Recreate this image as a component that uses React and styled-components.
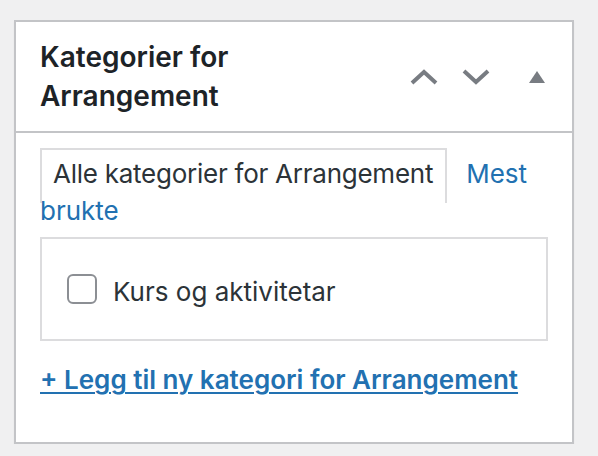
import React from 'react';
import styled, { createGlobalStyle } from 'styled-components';

const GlobalStyle = createGlobalStyle`
  body {
    margin: 0;
    background: #f0f0f1;
    font-family: Inter, "Noto Sans", sans-serif;
  }
`;

const Page = styled.div`
  padding: 20px 0 0 14px;
`;

const Postbox = styled.div`
  width: 560px;
  box-sizing: border-box;
  background: #fff;
  border: 2px solid #c3c4c7;
  box-shadow: 0 2px 2px rgba(0, 0, 0, 0.04);
`;

const Header = styled.div`
  display: flex;
  align-items: center;
  border-bottom: 2px solid #c3c4c7;
`;

const Title = styled.h2`
  flex: 1;
  margin: 0;
  padding: 16px 24px 15px;
  font-size: 28px;
  font-weight: 600;
  line-height: 1.4;
  color: #1d2327;
`;

const Actions = styled.div`
  display: flex;
  align-items: center;
`;

const IconButton = styled.button`
  width: ${(p) => p.$w}px;
  height: 72px;
  padding: 0;
  border: 0;
  background: none;
  display: flex;
  align-items: center;
  justify-content: center;
  cursor: pointer;
`;

const Inside = styled.div`
  padding: 22px 24px 44px;
`;

const Tabs = styled.ul`
  margin: 0 0 8px;
  padding: 0;
  list-style: none;
  font-size: 26px;
  line-height: 37px;
`;

const ActiveTab = styled.li`
  display: inline;
  padding: 8px 12px 14px 11px;
  border: 2px solid #dcdcde;
  border-bottom: 0;
  color: #2c3338;
  letter-spacing: -0.25px;
`;

const Tab = styled.li`
  display: inline;
  margin-left: 19px;

  a {
    color: #2271b1;
    text-decoration: none;
  }
`;

const Panel = styled.div`
  height: 100px;
  border: 2px solid #dcdcde;
  display: flex;
  align-items: center;
  padding: 0 25px;
`;

const Item = styled.label`
  display: flex;
  align-items: center;
  gap: 16px;
  font-size: 26px;
  line-height: 37px;
  color: #2c3338;
`;

const ItemText = styled.span`
  padding-top: 5px;
`;

const Checkbox = styled.input`
  appearance: none;
  width: 30px;
  height: 30px;
  margin: 0;
  box-sizing: border-box;
  border: 2px solid #8c8f94;
  border-radius: 6px;
  background: #fff;
`;

const AddLink = styled.a`
  display: inline-block;
  margin-top: 20px;
  font-size: 26px;
  line-height: 37px;
  font-weight: 600;
  color: #2271b1;
  text-decoration: underline;
  text-decoration-thickness: 2px;
  text-underline-offset: 3px;
`;

const Chevron = ({ up }) => (
  <svg width="28" height="16" viewBox="0 0 28 16">
    <polyline
      points={up ? '2,14 14,3 26,14' : '2,2 14,13 26,2'}
      fill="none"
      stroke="#787c82"
      strokeWidth="4"
    />
  </svg>
);

const Triangle = () => (
  <svg width="16" height="12" viewBox="0 0 16 12">
    <polygon points="8,0 16,12 0,12" fill="#787c82" />
  </svg>
);

export default function App() {
  return (
    <Page>
      <GlobalStyle />
      <Postbox>
        <Header>
          <Title>Kategorier for Arrangement</Title>
          <Actions>
            <IconButton $w={52} aria-label="Flytt opp">
              <Chevron up />
            </IconButton>
            <IconButton $w={52} aria-label="Flytt ned">
              <Chevron />
            </IconButton>
            <IconButton $w={70} aria-label="Vis/skjul panel">
              <Triangle />
            </IconButton>
          </Actions>
        </Header>
        <Inside>
          <Tabs>
            <ActiveTab>Alle kategorier for Arrangement</ActiveTab>
            <Tab>
              <a href="#">Mest brukte</a>
            </Tab>
          </Tabs>
          <Panel>
            <Item>
              <Checkbox type="checkbox" />
              <ItemText>Kurs og aktivitetar</ItemText>
            </Item>
          </Panel>
          <AddLink href="#">+ Legg til ny kategori for Arrangement</AddLink>
        </Inside>
      </Postbox>
    </Page>
  );
}
